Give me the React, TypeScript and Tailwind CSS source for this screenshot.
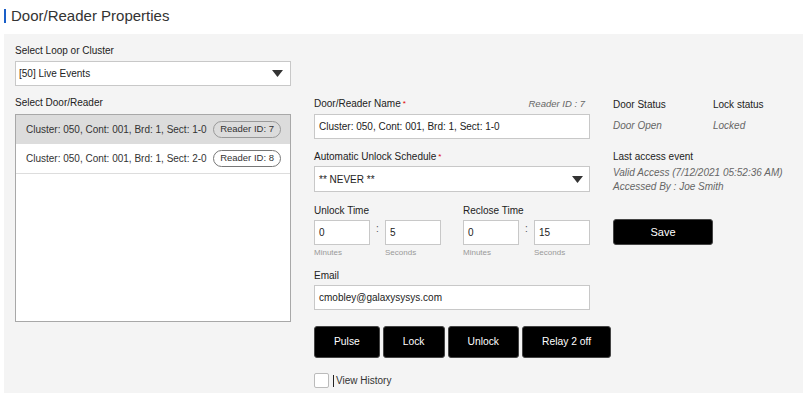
import React from "react";

const Arrow = () => (
  <svg width="11" height="7" viewBox="0 0 11 7" className="shrink-0">
    <polygon points="0,0 11,0 5.5,7" fill="#333" />
  </svg>
);

const Label = ({ children, className = "" }: { children: React.ReactNode; className?: string }) => (
  <div className={"text-[10px] leading-[12px] text-[#222] " + className}>{children}</div>
);

const Req = () => <span className="text-[#d00] text-[8px] align-top ml-[2px]">*</span>;

const TimeBox = ({ v }: { v: string }) => (
  <div className="w-[56px] h-[25px] bg-white border border-[#c8c8c8] flex items-center pl-[4px] text-[10px] text-[#222]">{v}</div>
);

const Btn = ({ children }: { children: React.ReactNode }) => (
  <div className="h-[32px] px-[19px] bg-black border border-[#444] rounded-[3px] flex items-center justify-center text-white text-[10.3px]">{children}</div>
);

export default function App() {
  return (
    <div className="w-[803px] h-[394px] bg-white overflow-hidden" style={{ fontFamily: '"Liberation Sans", Arial, sans-serif' }}>
      <div className="h-[34px] flex items-start pl-[4px] pt-[7px]">
        <div className="w-[2px] h-[14px] bg-[#1a5fc8] mt-[2px]" />
        <div className="ml-[5px] text-[15px] leading-[18px] text-[#333]">Door/Reader Properties</div>
      </div>
      <div className="ml-[4px] h-[359px] bg-[#f4f4f4] pl-[11px] pt-[11px]">
        <Label>Select Loop or Cluster</Label>
        <div className="mt-[4px] w-[276px] h-[25px] bg-white border border-[#c8c8c8] flex items-center justify-between pl-[3px] pr-[7px]">
          <span className="text-[10px] text-[#222]">[50] Live Events</span>
          <Arrow />
        </div>
        <div className="flex mt-[11px]">
          {/* left */}
          <div className="w-[276px]">
            <Label>Select Door/Reader</Label>
            <div className="mt-[5px] h-[208px] bg-white border border-[#a8a8a8]">
              <div className="h-[29px] bg-[#dcdcdc] flex items-center justify-between pl-[10px] pr-[9px]">
                <span className="text-[10px] text-[#333]">Cluster: 050, Cont: 001, Brd: 1, Sect: 1-0</span>
                <span className="h-[17px] px-[6px] rounded-full border border-[#999] flex items-center text-[9.5px] text-[#333]">Reader ID: 7</span>
              </div>
              <div className="h-[30px] bg-white border-b border-[#ddd] flex items-center justify-between pl-[10px] pr-[9px]">
                <span className="text-[10px] text-[#333]">Cluster: 050, Cont: 001, Brd: 1, Sect: 2-0</span>
                <span className="h-[17px] px-[6px] rounded-full border border-[#777] flex items-center text-[9.5px] text-[#333]">Reader ID: 8</span>
              </div>
            </div>
          </div>
          {/* middle */}
          <div className="w-[276px] ml-[23px] mt-[1px]">
            <div className="flex justify-between pr-[5px]">
              <Label>Door/Reader Name<Req /></Label>
              <span className="text-[9.5px] leading-[12px] italic text-[#666]">Reader ID : 7</span>
            </div>
            <div className="mt-[4px] h-[25px] bg-white border border-[#c8c8c8] flex items-center pl-[4px] text-[10px] text-[#222]">
              Cluster: 050, Cont: 001, Brd: 1, Sect: 1-0
            </div>
            <Label className="mt-[12px]">Automatic Unlock Schedule<Req /></Label>
            <div className="mt-[3px] h-[26px] bg-white border border-[#c8c8c8] flex items-center justify-between pl-[4px] pr-[6px]">
              <span className="text-[10px] text-[#222]">** NEVER **</span>
              <Arrow />
            </div>
            <div className="flex mt-[13px]">
              <div className="w-[149px]">
                <Label>Unlock Time</Label>
                <div className="flex items-start mt-[3px]">
                  <TimeBox v="0" />
                  <div className="w-[15px] text-center text-[10px] leading-[18px] text-[#555]">:</div>
                  <TimeBox v="5" />
                </div>
                <div className="flex mt-[3px] text-[8px] leading-[10px] text-[#999]">
                  <span className="w-[71px]">Minutes</span>
                  <span>Seconds</span>
                </div>
              </div>
              <div>
                <Label>Reclose Time</Label>
                <div className="flex items-start mt-[3px]">
                  <TimeBox v="0" />
                  <div className="w-[15px] text-center text-[10px] leading-[18px] text-[#555]">:</div>
                  <TimeBox v="15" />
                </div>
                <div className="flex mt-[3px] text-[8px] leading-[10px] text-[#999]">
                  <span className="w-[71px]">Minutes</span>
                  <span>Seconds</span>
                </div>
              </div>
            </div>
            <Label className="mt-[12px]">Email</Label>
            <div className="mt-[3px] h-[25px] bg-white border border-[#c8c8c8] flex items-center pl-[4px] text-[10px] text-[#222]">
              cmobley@galaxysysys.com
            </div>
            <div className="flex gap-[3px] mt-[16px] w-max">
              <Btn>Pulse</Btn>
              <Btn>Lock</Btn>
              <Btn>Unlock</Btn>
              <Btn>Relay 2 off</Btn>
            </div>
            <div className="flex items-center mt-[15px]">
              <div className="w-[15px] h-[15px] bg-white border border-[#bbb] rounded-[2px]" />
              <div className="w-[1px] h-[12px] bg-[#222] ml-[4px]" />
              <span className="ml-[2px] text-[10px] text-[#333]">View History</span>
            </div>
          </div>
          {/* right */}
          <div className="ml-[23px] mt-[2px]">
            <div className="flex">
              <div className="w-[100px]">
                <Label>Door Status</Label>
                <div className="mt-[9px] text-[10px] leading-[12px] italic text-[#666]">Door Open</div>
              </div>
              <div>
                <Label>Lock status</Label>
                <div className="mt-[9px] text-[10px] leading-[12px] italic text-[#666]">Locked</div>
              </div>
            </div>
            <Label className="mt-[19px]">Last access event</Label>
            <div className="mt-[3px] text-[10px] leading-[14px] italic text-[#666]">
              <div>Valid Access (7/12/2021 05:52:36 AM)</div>
              <div>Accessed By : Joe Smith</div>
            </div>
            <div className="mt-[25px] w-[100px] h-[26px] bg-black border border-[#444] rounded-[3px] flex items-center justify-center text-white text-[11px]">Save</div>
          </div>
        </div>
      </div>
    </div>
  );
}
